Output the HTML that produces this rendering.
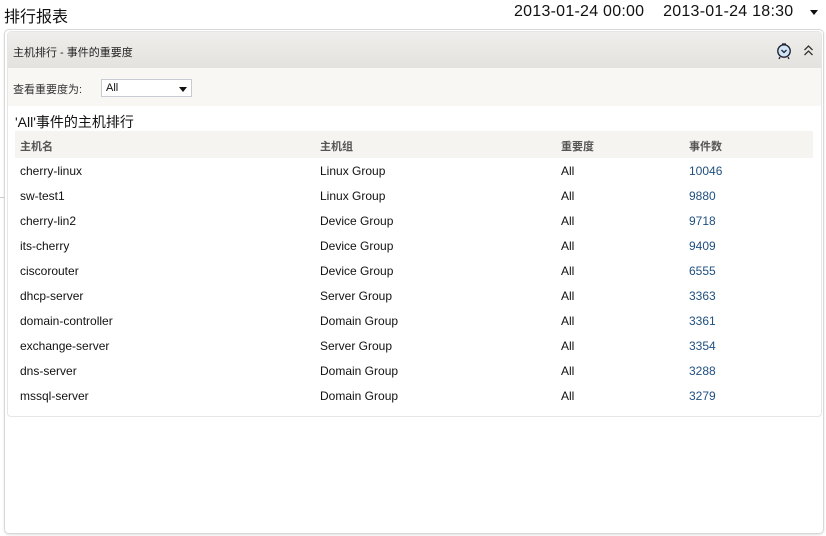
<!DOCTYPE html>
<html><head><meta charset="utf-8"><style>
*{margin:0;padding:0;box-sizing:border-box}
body{width:826px;height:536px;background:#fff;font-family:"Liberation Sans","Noto Sans CJK SC",sans-serif;position:relative;overflow:hidden;color:#111}
.t{position:absolute;white-space:nowrap}
#outer{position:absolute;left:4px;top:29px;width:820px;height:505px;border:1px solid #d8d8d8;border-radius:5px;box-shadow:0 1px 2px rgba(0,0,0,.12)}
#inner{position:absolute;left:7px;top:31px;width:815px;height:386px;border:1px solid #e6e6e6;border-radius:4px;background:#fff}
#hdr{position:absolute;left:8px;top:32px;width:813px;height:36px;background:linear-gradient(#efeeec,#e4e2de)}
#flt{position:absolute;left:8px;top:68px;width:813px;height:38px;background:#f8f7f4}
#th{position:absolute;left:15px;top:131px;width:798px;height:27px;background:#f5f4f0}
.r{position:absolute;font-size:12px;color:#111}
.n{color:#1f4f7f}
.h{font-size:11px;color:#555;font-weight:bold}
</style></head><body>
<div class="t" style="left:4px;top:3px;font-size:16px">排行报表</div>
<div class="t" style="left:514px;top:3px;font-size:16px;letter-spacing:0.25px">2013-01-24 00:00&nbsp;&nbsp;&nbsp;&nbsp;2013-01-24 18:30</div>
<div class="t" style="left:810px;top:10px;width:0;height:0;border-left:4px solid transparent;border-right:4px solid transparent;border-top:5px solid #111"></div>
<div style="position:absolute;left:0;top:197px;width:4px;height:1px;background:#ccc"></div>
<div id="outer"></div>
<div id="inner"></div>
<div id="hdr"></div>
<div class="t" style="left:13px;top:44px;font-size:11px;color:#222">主机排行 - 事件的重要度</div>
<svg style="position:absolute;left:776px;top:43px" width="16" height="17" viewBox="0 0 16 17"><circle cx="8" cy="8" r="6.2" fill="#cfe6f7" stroke="#223" stroke-width="1.4"/><path d="M5.5 7l2.5 2.5 2.5-2.5" fill="none" stroke="#223" stroke-width="1.3"/><path d="M4 14l-1 2M12 14l1 2" stroke="#223" stroke-width="1.3"/><path d="M6 1h4" stroke="#223" stroke-width="1.3"/></svg>
<svg style="position:absolute;left:803px;top:45px" width="11" height="11" viewBox="0 0 11 11"><path d="M1.5 5l4-4 4 4M1.5 10l4-4 4 4" fill="none" stroke="#333" stroke-width="1.3"/></svg>
<div id="flt"></div>
<div class="t" style="left:13px;top:81px;font-size:11px;color:#333">查看重要度为:</div>
<div style="position:absolute;left:101px;top:79px;width:91px;height:18px;border:1px solid #c8ccd2;background:#fff"></div>
<div class="t" style="left:106px;top:82px;font-size:11px">All</div>
<div class="t" style="left:179px;top:87px;width:0;height:0;border-left:4px solid transparent;border-right:4px solid transparent;border-top:5px solid #111"></div>
<div class="t" style="left:15px;top:112px;font-size:14px">'All'事件的主机排行</div>
<div id="th"></div>
<div class="r h" style="left:20px;top:138px">主机名</div>
<div class="r h" style="left:320px;top:138px">主机组</div>
<div class="r h" style="left:561px;top:138px">重要度</div>
<div class="r h" style="left:689px;top:138px">事件数</div>
<div class="r" style="left:20px;top:159px;line-height:25px">cherry-linux<br>sw-test1<br>cherry-lin2<br>its-cherry<br>ciscorouter<br>dhcp-server<br>domain-controller<br>exchange-server<br>dns-server<br>mssql-server</div>
<div class="r" style="left:320px;top:159px;line-height:25px">Linux Group<br>Linux Group<br>Device Group<br>Device Group<br>Device Group<br>Server Group<br>Domain Group<br>Server Group<br>Domain Group<br>Domain Group</div>
<div class="r" style="left:561px;top:159px;line-height:25px">All<br>All<br>All<br>All<br>All<br>All<br>All<br>All<br>All<br>All</div>
<div class="r n" style="left:689px;top:159px;line-height:25px">10046<br>9880<br>9718<br>9409<br>6555<br>3363<br>3361<br>3354<br>3288<br>3279</div>
</body></html>
